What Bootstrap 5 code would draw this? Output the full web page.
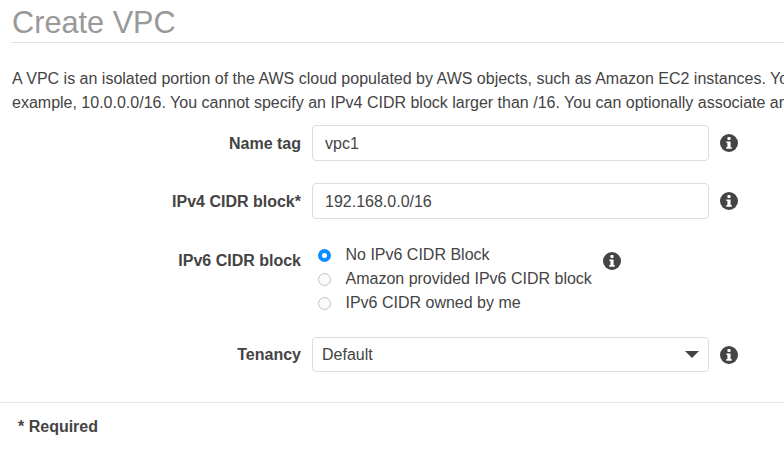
<!DOCTYPE html>
<html lang="en">
<head>
    <meta charset="UTF-8">
    <meta name="viewport" content="width=device-width, initial-scale=1.0">
    <title>Create VPC</title>
    <link href="https://cdn.jsdelivr.net/npm/bootstrap@5.3.0/dist/css/bootstrap.min.css" rel="stylesheet">
    <style>
        html, body { overflow: hidden; height: 459px; }
        body { font-family: "Liberation Sans", Arial, sans-serif; font-size: 16px; color: #444; background: #fff; }
        .vpc-head { margin: 0 0 0 11px; padding: 3px 0 0 1px; height: 43px; font-size: 30.7px; line-height: 39px; font-weight: 400; color: #999; border-bottom: 1px solid #e4e4e4; }
        .vpc-intro { margin: 24px 0 0 12px; line-height: 24px; white-space: nowrap; overflow: hidden; color: #444; }
        .vpc-form { margin-top: 10px; }
        .vpc-row { display: flex; align-items: center; margin-bottom: 22px; }
        .vpc-label { width: 301px; margin: 0; padding-top: 1px; text-align: right; font-weight: 700; color: #444; flex: none; }
        .vpc-field { width: 397px; margin-left: 11px; flex: none; }
        .vpc-input.form-control, .vpc-input.form-select { height: 36px; padding: 1px 12px 0; font-size: 16px; color: #444; border: 1px solid #ddd; border-radius: 4px; box-shadow: none; }
        .vpc-input.form-select { height: 35px; padding-left: 9px; background-image: none; }
        .vpc-caret { position: absolute; right: 10px; top: 14px; width: 0; height: 0; border-left: 7px solid transparent; border-right: 7px solid transparent; border-top: 7px solid #444; }
        .vpc-info { width: 18px; height: 18px; flex: none; margin-left: 11px; display: block; }
        .vpc-radio-row { align-items: flex-start; margin-top: 24px; }
        .vpc-radio-row .vpc-label { margin-top: 5px; }
        .vpc-radio-row .vpc-info { margin-top: 9px; }
        .vpc-radios { width: 280px; margin-left: 11px; flex: none; }
        .vpc-radio { display: flex; align-items: center; height: 24px; margin: 0; }
        .vpc-radio input { appearance: none; width: 13px; height: 13px; margin: 0 15px 0 5.5px; border: 1px solid #c4c4c4; border-radius: 50%; background: #fbfbfb; flex: none; }
        .vpc-radio input:checked { border: 4px solid #0a8dff; background: #fff; }
        .vpc-foot { margin-top: 30px; border-top: 1px solid #e6e6e6; padding: 12px 0 0 18px; font-weight: 700; line-height: 24px; color: #444; }
    </style>
</head>
<body>
    <h1 class="vpc-head">Create VPC</h1>
    <p class="vpc-intro">A VPC is an isolated portion of the AWS cloud populated by AWS objects, such as Amazon EC2 instances. Yo<br>example, 10.0.0.0/16. You cannot specify an IPv4 CIDR block larger than /16. You can optionally associate an</p>

    <svg width="0" height="0" class="d-block">
        <symbol id="vpc-i" viewBox="0 0 18 18">
            <circle cx="9" cy="9" r="9" fill="#444"/>
            <rect x="7.4" y="2.9" width="3.2" height="3" rx="1" fill="#fff"/>
            <path d="M6.4 7.4h4.2v5.6h1.1v1.7H6.3V13h1.1V9.1h-1z" fill="#fff"/>
        </symbol>
    </svg>

    <form class="vpc-form">
        <div class="vpc-row">
            <label class="vpc-label" for="nameTag">Name tag</label>
            <div class="vpc-field"><input id="nameTag" class="form-control vpc-input" value="vpc1"></div>
            <svg class="vpc-info"><use href="#vpc-i"/></svg>
        </div>
        <div class="vpc-row">
            <label class="vpc-label" for="cidr">IPv4 CIDR block*</label>
            <div class="vpc-field"><input id="cidr" class="form-control vpc-input" value="192.168.0.0/16"></div>
            <svg class="vpc-info"><use href="#vpc-i"/></svg>
        </div>
        <div class="vpc-row vpc-radio-row">
            <span class="vpc-label">IPv6 CIDR block</span>
            <div class="vpc-radios">
                <label class="vpc-radio"><input type="radio" name="v6" checked>No IPv6 CIDR Block</label>
                <label class="vpc-radio"><input type="radio" name="v6">Amazon provided IPv6 CIDR block</label>
                <label class="vpc-radio"><input type="radio" name="v6">IPv6 CIDR owned by me</label>
            </div>
            <svg class="vpc-info"><use href="#vpc-i"/></svg>
        </div>
        <div class="vpc-row mb-0">
            <label class="vpc-label" for="tenancy">Tenancy</label>
            <div class="vpc-field position-relative">
                <select id="tenancy" class="form-select vpc-input"><option>Default</option></select>
                <span class="vpc-caret"></span>
            </div>
            <svg class="vpc-info"><use href="#vpc-i"/></svg>
        </div>
    </form>
    <div class="vpc-foot">* Required</div>
    <script src="https://cdn.jsdelivr.net/npm/bootstrap@5.3.0/dist/js/bootstrap.bundle.min.js"></script>
</body>
</html>
